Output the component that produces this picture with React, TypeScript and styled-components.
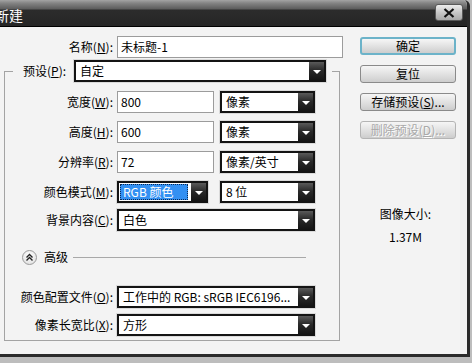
import React from "react";
import styled, { createGlobalStyle } from "styled-components";

const Global = createGlobalStyle`
  html, body { margin: 0; padding: 0; }
  body {
    font-family: "Noto Sans CJK SC", "Noto Sans", sans-serif;
    font-size: 12px;
    color: #000;
  }
`;

const Screen = styled.div`
  width: 472px;
  height: 363px;
  overflow: hidden;
  background: #bdbdbd;
`;

const Dialog = styled.div`
  width: 470px;
  height: 357px;
  box-sizing: border-box;
  display: flex;
  flex-direction: column;
  background: #f3f3f3;
  border-right: 3px solid #2b2b2b;
  border-bottom: 3px solid #2b2b2b;
  border-top-right-radius: 6px;
  overflow: hidden;
`;

const TitleBar = styled.div`
  height: 26px;
  flex: none;
  display: flex;
  align-items: flex-start;
  background: linear-gradient(
    to bottom,
    #a4a4a4 0px,
    #858585 3px,
    #5c5c5c 9px,
    #2c2c2c 10px,
    #262626 25px
  );
  border-bottom: 1px solid #000;
`;

const Title = styled.span`
  margin-left: -5px;
  margin-top: 7px;
  color: #fff;
  font-size: 14px;
  line-height: 16px;
`;

const CloseButton = styled.div`
  margin-left: auto;
  margin-right: 4px;
  margin-top: 4px;
  width: 28px;
  height: 17px;
  box-sizing: border-box;
  border: 1px solid #5a5a5a;
  border-radius: 3px;
  background: linear-gradient(to bottom, #ececec, #c4c4c4 55%, #a9a9a9);
  display: flex;
  align-items: center;
  justify-content: center;
`;

const Body = styled.div`
  flex: 1;
  display: flex;
`;

const FormCol = styled.div`
  width: 344px;
  flex: none;
  display: flex;
  flex-direction: column;
  padding-top: 9px;
`;

const Row = styled.div<{ $mt?: number }>`
  display: flex;
  align-items: center;
  height: 22px;
  margin-top: ${(p) => p.$mt ?? 0}px;
`;

const Label = styled.div<{ $w: number }>`
  width: ${(p) => p.$w}px;
  flex: none;
  box-sizing: border-box;
  padding-right: 4px;
  text-align: right;
  white-space: nowrap;
  line-height: 14px;
`;

const U = styled.span`
  text-decoration: underline;
`;

const TextField = styled.div<{ $w: number }>`
  width: ${(p) => p.$w}px;
  height: 22px;
  flex: none;
  box-sizing: border-box;
  border: 1px solid #9c9c9c;
  background: #fff;
  display: flex;
  align-items: center;
  padding-left: 3px;
  line-height: 14px;
`;

const Select = styled.div<{ $w: number; $ml?: number }>`
  width: ${(p) => p.$w}px;
  height: 22px;
  flex: none;
  margin-left: ${(p) => p.$ml ?? 0}px;
  box-sizing: border-box;
  border: 2px solid #141414;
  background: #fff;
  display: flex;
  align-items: stretch;
  box-shadow: 0 0 0 1px #dadada;
`;

const SelectText = styled.div<{ $active?: boolean }>`
  flex: 1;
  min-width: 0;
  display: flex;
  align-items: center;
  white-space: nowrap;
  overflow: hidden;
  line-height: 14px;
  padding-left: 4px;
  ${(p) =>
    p.$active
      ? `
    margin: 1px 3px 1px 1px;
    padding-left: 3px;
    background: #3390f2;
    color: #fff;
    outline: 1px dotted #0a2a55;
    outline-offset: -1px;
  `
      : ""}
`;

const ArrowBox = styled.div`
  width: 15px;
  flex: none;
  background: linear-gradient(to bottom, #5a5a5a, #2a2a2a 45%, #151515);
  display: flex;
  align-items: center;
  justify-content: center;
  &::after {
    content: "";
    width: 0;
    height: 0;
    border-left: 4px solid transparent;
    border-right: 4px solid transparent;
    border-top: 4px solid #fff;
    margin-top: 1px;
  }
`;

const Group = styled.div`
  margin: 13px 0 0 4px;
  width: 336px;
  box-sizing: border-box;
  border: 1px solid #a3a3a3;
  padding-bottom: 4px;
  display: flex;
  flex-direction: column;
`;

const LegendRow = styled.div`
  margin: -12px 0 0 8px;
  align-self: flex-start;
  display: flex;
  align-items: center;
  height: 22px;
  background: #f3f3f3;
  padding: 0 6px 0 10px;
`;

const LegendLabel = styled.div`
  width: 51px;
  flex: none;
  white-space: nowrap;
  line-height: 14px;
`;

const AdvRow = styled.div`
  display: flex;
  align-items: center;
  height: 16px;
  margin-top: 18px;
  padding-left: 17px;
`;

const AdvIcon = styled.div`
  width: 15px;
  height: 15px;
  flex: none;
  box-sizing: border-box;
  border: 1px solid #9a9a9a;
  border-radius: 50%;
  background: radial-gradient(circle at 50% 35%, #ffffff, #dcdcdc);
  display: flex;
  align-items: center;
  justify-content: center;
`;

const AdvText = styled.div`
  width: 29px;
  flex: none;
  margin-left: 7px;
  line-height: 14px;
`;

const AdvLine = styled.div`
  width: 233px;
  height: 1px;
  flex: none;
  background: #a8a8a8;
`;

const SideCol = styled.div`
  flex: 1;
  display: flex;
  flex-direction: column;
  padding-top: 10px;
`;

const Button = styled.div<{ $default?: boolean; $disabled?: boolean; $mt?: number }>`
  margin-left: 16px;
  margin-top: ${(p) => p.$mt ?? 0}px;
  width: 96px;
  height: 18px;
  box-sizing: border-box;
  border-radius: 3px;
  border: ${(p) => (p.$default ? "2px solid #6cb3c9" : `1px solid ${p.$disabled ? "#b4b4b4" : "#8a8a8a"}`)};
  background: linear-gradient(to bottom, #f6f6f6, #e2e2e2 50%, #cdcdcd);
  display: flex;
  align-items: center;
  justify-content: center;
  line-height: 14px;
  white-space: nowrap;
  color: ${(p) => (p.$disabled ? "#a9a9a9" : "#000")};
  text-shadow: ${(p) => (p.$disabled ? "1px 1px 0 #fff" : "none")};
`;

const InfoText = styled.div<{ $mt: number }>`
  margin-top: ${(p) => p.$mt}px;
  text-align: center;
  line-height: 14px;
`;

function UpChevrons() {
  return (
    <svg width="9" height="9" viewBox="0 0 9 9">
      <path d="M1.5 4.5 L4.5 1.5 L7.5 4.5" fill="none" stroke="#222" strokeWidth="1.4" />
      <path d="M1.5 7.5 L4.5 4.5 L7.5 7.5" fill="none" stroke="#222" strokeWidth="1.4" />
    </svg>
  );
}

function CloseX() {
  return (
    <svg width="12" height="10" viewBox="0 0 12 10">
      <path d="M1.5 1 L10.5 9 M10.5 1 L1.5 9" stroke="#111" strokeWidth="2.2" />
    </svg>
  );
}

function Dropdown({ w, ml, text, active }: { w: number; ml?: number; text: string; active?: boolean }) {
  return (
    <Select $w={w} $ml={ml}>
      <SelectText $active={active}>{text}</SelectText>
      <ArrowBox />
    </Select>
  );
}

export default function App() {
  return (
    <>
      <Global />
      <Screen>
        <Dialog>
          <TitleBar>
            <Title>新建</Title>
            <CloseButton>
              <CloseX />
            </CloseButton>
          </TitleBar>
          <Body>
            <FormCol>
              <Row>
                <Label $w={117}>
                  名称(<U>N</U>):
                </Label>
                <TextField $w={226}>未标题-1</TextField>
              </Row>
              <Group>
                <LegendRow>
                  <LegendLabel>
                    预设(<U>P</U>):
                  </LegendLabel>
                  <Dropdown w={252} text="自定" />
                </LegendRow>
                <Row $mt={9}>
                  <Label $w={112}>
                    宽度(<U>W</U>):
                  </Label>
                  <TextField $w={97}>800</TextField>
                  <Dropdown w={95} ml={6} text="像素" />
                </Row>
                <Row $mt={8}>
                  <Label $w={112}>
                    高度(<U>H</U>):
                  </Label>
                  <TextField $w={97}>600</TextField>
                  <Dropdown w={95} ml={6} text="像素" />
                </Row>
                <Row $mt={8}>
                  <Label $w={112}>
                    分辨率(<U>R</U>):
                  </Label>
                  <TextField $w={97}>72</TextField>
                  <Dropdown w={95} ml={6} text="像素/英寸" />
                </Row>
                <Row $mt={8}>
                  <Label $w={112}>
                    颜色模式(<U>M</U>):
                  </Label>
                  <Dropdown w={91} text="RGB 颜色" active />
                  <Dropdown w={95} ml={12} text="8 位" />
                </Row>
                <Row $mt={6}>
                  <Label $w={112}>
                    背景内容(<U>C</U>):
                  </Label>
                  <Dropdown w={198} text="白色" />
                </Row>
                <AdvRow>
                  <AdvIcon>
                    <UpChevrons />
                  </AdvIcon>
                  <AdvText>高级</AdvText>
                  <AdvLine />
                </AdvRow>
                <Row $mt={21}>
                  <Label $w={112}>
                    颜色配置文件(<U>O</U>):
                  </Label>
                  <Dropdown w={198} text="工作中的 RGB: sRGB IEC6196..." />
                </Row>
                <Row $mt={6}>
                  <Label $w={112}>
                    像素长宽比(<U>X</U>):
                  </Label>
                  <Dropdown w={198} text="方形" />
                </Row>
              </Group>
            </FormCol>
            <SideCol>
              <Button $default>确定</Button>
              <Button $mt={10}>复位</Button>
              <Button $mt={10}>
                存储预设(<U>S</U>)...
              </Button>
              <Button $mt={10} $disabled>
                删除预设(<U>D</U>)...
              </Button>
              <InfoText $mt={68}>图像大小:</InfoText>
              <InfoText $mt={9}>1.37M</InfoText>
            </SideCol>
          </Body>
        </Dialog>
      </Screen>
    </>
  );
}
